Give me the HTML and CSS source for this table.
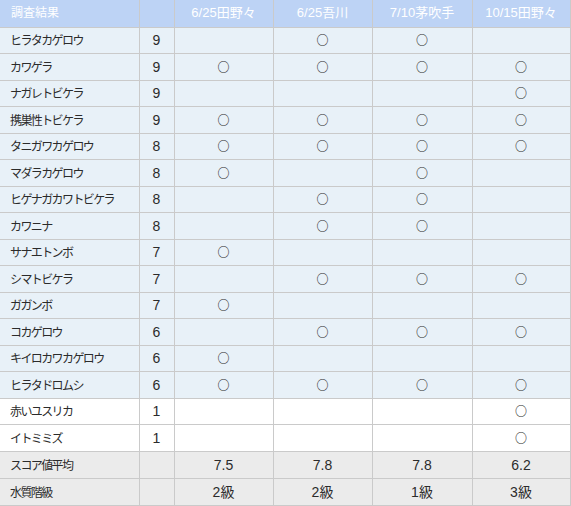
FILE: index.html
```html
<!DOCTYPE html>
<html lang="ja">
<head>
<meta charset="utf-8">
<title>調査結果</title>
<link rel="stylesheet" href="styles.css">
</head>
<body>
<table class="results">
  <colgroup>
    <col class="c-name"><col class="c-score"><col class="c-a"><col class="c-b"><col class="c-c"><col class="c-d">
  </colgroup>
  <thead>
    <tr>
      <th class="h-title">調査結果</th>
      <th></th>
      <th>6/25田野々</th>
      <th>6/25吾川</th>
      <th>7/10茅吹手</th>
      <th>10/15田野々</th>
    </tr>
  </thead>
  <tbody>
    <tr class="blue"><td class="name">ヒラタカゲロウ</td><td class="num">9</td><td></td><td class="mk">○</td><td class="mk">○</td><td></td></tr>
    <tr class="blue"><td class="name">カワゲラ</td><td class="num">9</td><td class="mk">○</td><td class="mk">○</td><td class="mk">○</td><td class="mk">○</td></tr>
    <tr class="blue"><td class="name">ナガレトビケラ</td><td class="num">9</td><td></td><td></td><td></td><td class="mk">○</td></tr>
    <tr class="blue"><td class="name">携巣性トビケラ</td><td class="num">9</td><td class="mk">○</td><td class="mk">○</td><td class="mk">○</td><td class="mk">○</td></tr>
    <tr class="blue"><td class="name">タニガワカゲロウ</td><td class="num">8</td><td class="mk">○</td><td class="mk">○</td><td class="mk">○</td><td class="mk">○</td></tr>
    <tr class="blue"><td class="name">マダラカゲロウ</td><td class="num">8</td><td class="mk">○</td><td></td><td class="mk">○</td><td></td></tr>
    <tr class="blue"><td class="name">ヒゲナガカワトビケラ</td><td class="num">8</td><td></td><td class="mk">○</td><td class="mk">○</td><td></td></tr>
    <tr class="blue"><td class="name">カワニナ</td><td class="num">8</td><td></td><td class="mk">○</td><td class="mk">○</td><td></td></tr>
    <tr class="blue"><td class="name">サナエトンボ</td><td class="num">7</td><td class="mk">○</td><td></td><td></td><td></td></tr>
    <tr class="blue"><td class="name">シマトビケラ</td><td class="num">7</td><td></td><td class="mk">○</td><td class="mk">○</td><td class="mk">○</td></tr>
    <tr class="blue"><td class="name">ガガンボ</td><td class="num">7</td><td class="mk">○</td><td></td><td></td><td></td></tr>
    <tr class="blue"><td class="name">コカゲロウ</td><td class="num">6</td><td></td><td class="mk">○</td><td class="mk">○</td><td class="mk">○</td></tr>
    <tr class="blue"><td class="name">キイロカワカゲロウ</td><td class="num">6</td><td class="mk">○</td><td></td><td></td><td></td></tr>
    <tr class="blue"><td class="name">ヒラタドロムシ</td><td class="num">6</td><td class="mk">○</td><td class="mk">○</td><td class="mk">○</td><td class="mk">○</td></tr>
    <tr class="white"><td class="name">赤いユスリカ</td><td class="num">1</td><td></td><td></td><td></td><td class="mk">○</td></tr>
    <tr class="white"><td class="name">イトミミズ</td><td class="num">1</td><td></td><td></td><td></td><td class="mk">○</td></tr>
  </tbody>
  <tfoot>
    <tr class="gray"><td class="name">スコア値平均</td><td></td><td class="num">7.5</td><td class="num">7.8</td><td class="num">7.8</td><td class="num">6.2</td></tr>
    <tr class="gray"><td class="name">水質階級</td><td></td><td class="num">2級</td><td class="num">2級</td><td class="num">1級</td><td class="num">3級</td></tr>
  </tfoot>
</table>
</body>
</html>
```
FILE: styles.css
```css
html, body {
  margin: 0;
  padding: 0;
  background: #ffffff;
}
body {
  font-family: "Liberation Sans", "Noto Sans CJK JP", sans-serif;
  color: #333333;
}
.results {
  border-collapse: collapse;
  table-layout: fixed;
  width: 570px;
}
.c-name { width: 139px; }
.c-score { width: 35px; }
.c-a { width: 99px; }
.c-b { width: 99px; }
.c-c { width: 100px; }
.c-d { width: 98px; }
.results th,
.results td {
  border: 1px solid #cacaca;
  padding: 0;
  line-height: 16px;
}
.results thead tr {
  height: 27px;
  background: #bdd3f5;
}
.results th {
  color: #ffffff;
  font-weight: normal;
  font-size: 13px;
  text-align: center;
  border-top: none;
}
.results th:first-child,
.results td:first-child { border-left: none; }
.results th.h-title {
  text-align: left;
  padding-left: 11px;
  font-size: 12px;
}
.results tbody tr { height: 26.5px; }
.results tfoot tr { height: 27px; }
.blue { background: #e8f1f8; }
.white { background: #ffffff; }
.gray { background: #ebebeb; }
.name {
  font-family: "Noto Sans CJK JP", sans-serif;
  font-size: 12px;
  letter-spacing: -1.6px;
  padding-left: 10px !important;
  color: #2b2b2b;
}
.num {
  font-size: 14px;
  text-align: center;
  color: #2b2b2b;
}
.mk {
  font-family: "Noto Sans CJK JP", sans-serif;
  font-size: 12px;
  font-weight: bold;
  text-align: center;
  color: #2a2a2a;
}
```
